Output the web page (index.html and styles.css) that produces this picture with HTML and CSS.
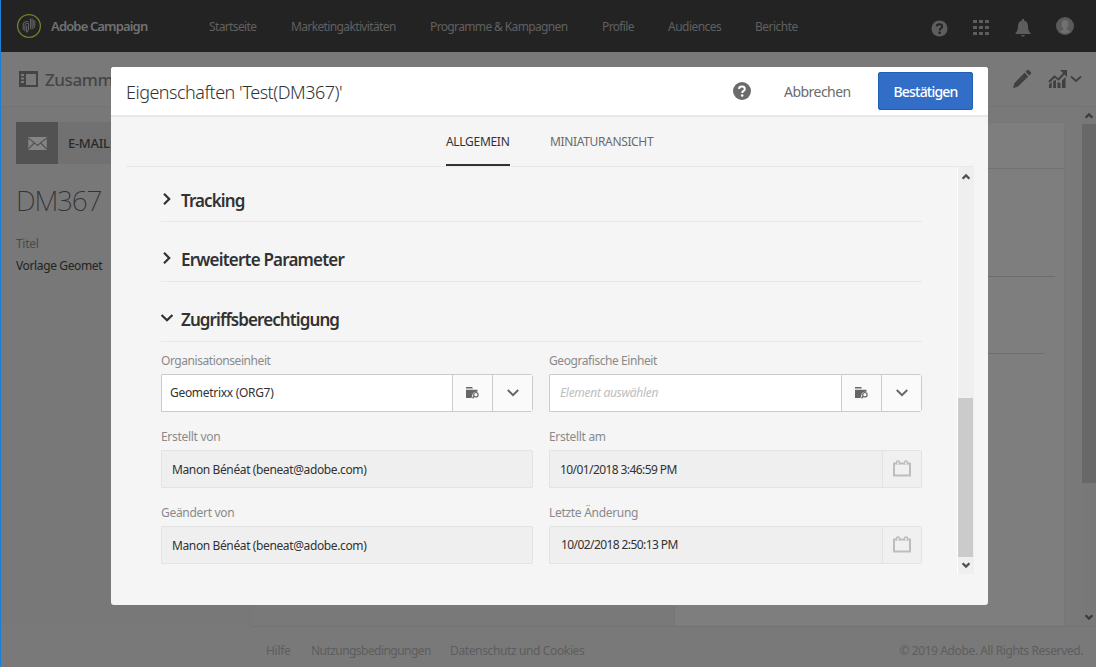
FILE: index.html
```html
<!DOCTYPE html>
<html lang="de">
<head>
<meta charset="utf-8">
<title>Adobe Campaign</title>
<link rel="stylesheet" href="styles.css">
</head>
<body>
<div class="app">
  <header class="topbar">
    <svg class="logo" viewBox="0 0 26 26"><circle cx="13" cy="13" r="11.4" fill="none" stroke="#73802b" stroke-width="1.3"/><g fill="none" stroke="#6c6c6c" stroke-width=".9"><path d="M7.200 17V12Q7.200 8.500 10.500 8.500H12.500"/><path d="M8.900 18.200V12.500Q8.900 10.300 11 10.300H12.500V16Q12.500 18.500 10.500 19.500"/><path d="M10.600 19V12.500"/><path d="M14.500 5.500V15.700H15.500Q18.800 15.700 18.800 12.500V7.500"/><path d="M16 5.500V14Q17.300 14 17.300 12.500V6.500"/></g></svg>
    <span class="brand">Adobe Campaign</span>
    <nav class="nav">
      <a class="n1">Startseite</a><a class="n2">Marketingaktivitäten</a><a class="n3">Programme &amp; Kampagnen</a><a class="n4">Profile</a><a class="n5">Audiences</a><a class="n6">Berichte</a>
    </nav>
    <div class="tools">
      <svg class="ic-help" viewBox="0 0 18 18"><circle cx="9" cy="9" r="8.500" fill="#5d5d5d"/><path d="M6 6.800Q6.200 4.500 9 4.500Q11.800 4.500 11.800 6.900Q11.800 8.300 10.200 9.100Q9.200 9.700 9.200 11" fill="none" stroke="#232323" stroke-width="2"/><circle cx="9.200" cy="13.500" r="1.300" fill="#232323"/></svg>
      <svg class="ic-grid" viewBox="0 0 16 16" fill="#5d5d5d"><path d="M0 0h4v3H0zM6 0h4v3H6zM12 0h4v3h-4zM0 6h4v3H0zM6 6h4v3H6zM12 6h4v3h-4zM0 12h4v3H0zM6 12h4v3H6zM12 12h4v3h-4z"/></svg>
      <svg class="ic-bell" viewBox="0 0 16 18" fill="#5d5d5d"><path d="M7 0h2v1.500Q13 2.500 13 7.500Q13 12 15.500 14v1H.5v-1Q3 12 3 7.500Q3 2.500 7 1.500zM6 16h4q-.5 1.500-2 1.500T6 16z"/></svg>
      <svg class="ic-user" viewBox="0 0 18 18"><circle cx="9" cy="9" r="9" fill="#5a5a5a"/><path d="M9 3Q12.500 3 12.500 7Q12.500 10 10.700 11.500V12.800L14 14Q12 16.500 9 16.500T4 14L7.300 12.800V11.500Q5.500 10 5.500 7Q5.500 3 9 3z" fill="#707070"/></svg>
    </div>
  </header>
  <div class="toolbar">
    <svg class="ic-rail" viewBox="0 0 19 16"><path d="M0 0h19v16H0zM7 3v11h10V3zM2 3v2h3V3zM2 6.500v2h3v-2zM2 10v2h3v-2z" fill="#444" fill-rule="evenodd"/></svg>
    <span class="crumb">Zusamme</span>
    <div class="actions">
      <svg class="ic-edit" viewBox="0 0 20 20" fill="#404040"><path d="M15 1.300Q16 .300 17.200 1.500L18.500 2.800Q19.700 4 18.700 5L17.200 6.500L13.500 2.800zM12.600 3.700L16.300 7.400L6 17.600L1 19.200L2.500 14z"/></svg>
      <svg class="ic-chart" viewBox="0 0 20 20"><path d="M1 15.500L3.700 13v6H1zM5.200 12L8 11v8H5.200zM9.500 13l3 1v5h-3zM14 11.500L17.500 8v11H14z" fill="#404040"/><path d="M1 13L6.500 7.500L10.500 10.500L16 4.500" fill="none" stroke="#404040" stroke-width="2"/><path d="M12 1h7v7z" fill="#404040"/></svg>
      <svg class="ic-down" viewBox="0 0 12 8"><path d="M1 1.500L6 6L11 1.500" fill="none" stroke="#404040" stroke-width="1.800"/></svg>
    </div>
  </div>
  <div class="workspace">
    <aside class="side">
      <div class="channel"><span class="mail"><svg viewBox="0 0 20 14"><path d="M0 0h20v14H0z" fill="#858585"/><path d="M0 1L10 9L20 1M0 13L6.500 6.500M20 13L13.500 6.500" fill="none" stroke="#525252" stroke-width="1.300"/></svg></span><span class="channel-name">E-MAIL</span></div>
      <div class="record">DM367</div>
      <div class="side-label">Titel</div>
      <div class="side-value">Vorlage Geomet</div>
    </aside>
    <main class="board"><section class="board-card"><div class="board-head"></div><div class="board-row"></div><div class="board-row short"></div></section></main>
    <div class="page-scroll"><svg class="arrow" viewBox="0 0 7 6"><path d="M.5 5L3.500 2L6.500 5" fill="none" stroke="#3c3c3c" stroke-width="2"/></svg><span class="page-thumb"></span><svg class="arrow" viewBox="0 0 7 6"><path d="M.5 1L3.500 4L6.500 1" fill="none" stroke="#3c3c3c" stroke-width="2"/></svg></div>
  </div>
  <footer class="footer"><a class="f1">Hilfe</a><a class="f2">Nutzungsbedingungen</a><a class="f3">Datenschutz und Cookies</a><span class="copy">© 2019 Adobe. All Rights Reserved.</span></footer>
</div>

<div class="dialog">
  <div class="dialog-head">
    <h1 class="dialog-title">Eigenschaften 'Test(DM367)'</h1>
    <svg class="ic-help2" viewBox="0 0 18 18"><circle cx="9" cy="9" r="9" fill="#6b6b6b"/><path d="M6 6.800Q6.200 4.500 9 4.500Q11.800 4.500 11.800 6.900Q11.800 8.300 10.200 9.100Q9.200 9.700 9.200 11" fill="none" stroke="#fff" stroke-width="2"/><circle cx="9.200" cy="13.500" r="1.300" fill="#fff"/></svg>
    <span class="cancel">Abbrechen</span>
    <button class="confirm"><span>Bestätigen</span></button>
  </div>
  <div class="tabs"><div class="tab active"><span>ALLGEMEIN</span></div><div class="tab second"><span>MINIATURANSICHT</span></div></div>
  <div class="dialog-body">
    <div class="form">
      <h2 class="section"><svg viewBox="0 0 12 12"><path d="M3 .8L8.200 6L3 11.200" fill="none" stroke="#323232" stroke-width="2.200"/></svg><span class="s1">Tracking</span></h2>
      <h2 class="section"><svg viewBox="0 0 12 12"><path d="M3 .8L8.200 6L3 11.200" fill="none" stroke="#323232" stroke-width="2.200"/></svg><span class="s2">Erweiterte Parameter</span></h2>
      <h2 class="section"><svg viewBox="0 0 12 12"><path d="M.6 3L6 8.300L11.400 3" fill="none" stroke="#323232" stroke-width="2.200"/></svg><span class="s3">Zugriffsberechtigung</span></h2>
      <div class="grid">
        <div class="field"><label class="l1">Organisationseinheit</label>
          <div class="input"><span class="value tight v1">Geometrixx (ORG7)</span><span class="btn"><svg class="ic-folder" viewBox="0 0 13 12"><path d="M0 0h6l1 1.500H0zM0 2.700h11.500v2Q6.500 4.200 6.300 8.500L5.500 11H0z" fill="#666"/><circle cx="9.900" cy="7.700" r="2.200" fill="none" stroke="#666" stroke-width="1.200"/><path d="M8.300 9.300L6.500 11.300" stroke="#666" stroke-width="1.500"/></svg></span><span class="btn"><svg class="ic-chev" viewBox="0 0 12 8"><path d="M.8 1L6 6.200L11.200 1" fill="none" stroke="#666" stroke-width="2"/></svg></span></div></div>
        <div class="field"><label class="l2">Geografische Einheit</label>
          <div class="input"><span class="value placeholder">Element auswählen</span><span class="btn"><svg class="ic-folder" viewBox="0 0 13 12"><path d="M0 0h6l1 1.500H0zM0 2.700h11.500v2Q6.500 4.200 6.300 8.500L5.500 11H0z" fill="#666"/><circle cx="9.900" cy="7.700" r="2.200" fill="none" stroke="#666" stroke-width="1.200"/><path d="M8.300 9.300L6.500 11.300" stroke="#666" stroke-width="1.500"/></svg></span><span class="btn"><svg class="ic-chev" viewBox="0 0 12 8"><path d="M.8 1L6 6.200L11.200 1" fill="none" stroke="#666" stroke-width="2"/></svg></span></div></div>
        <div class="field"><label class="l3">Erstellt von</label><div class="input disabled"><span class="value v3">Manon Bénéat (beneat@adobe.com)</span></div></div>
        <div class="field"><label class="l4">Erstellt am</label><div class="input disabled"><span class="value v4">10/01/2018 3:46:59 PM</span><span class="btn"><svg class="ic-cal" viewBox="0 0 18 17"><path d="M1 3.500h16V15.500H1z" fill="none" stroke="#bdbdbd" stroke-width="2"/><path d="M3.500 4.500V2.500Q3.500 1 5 1T6.500 2.500V4.500M11.500 4.500V2.500Q11.500 1 13 1T14.500 2.500V4.500" fill="#eee" stroke="#bdbdbd" stroke-width="1.500"/></svg></span></div></div>
        <div class="field"><label class="l5">Geändert von</label><div class="input disabled"><span class="value v3">Manon Bénéat (beneat@adobe.com)</span></div></div>
        <div class="field"><label class="l6">Letzte Änderung</label><div class="input disabled"><span class="value v4 late">10/02/2018 2:50:13 PM</span><span class="btn"><svg class="ic-cal" viewBox="0 0 18 17"><path d="M1 3.500h16V15.500H1z" fill="none" stroke="#bdbdbd" stroke-width="2"/><path d="M3.500 4.500V2.500Q3.500 1 5 1T6.500 2.500V4.500M11.500 4.500V2.500Q11.500 1 13 1T14.500 2.500V4.500" fill="#eee" stroke="#bdbdbd" stroke-width="1.500"/></svg></span></div></div>
      </div>
    </div>
    <div class="scroll"><svg class="arrow" viewBox="0 0 7 6"><path d="M.5 5L3.500 2L6.500 5" fill="none" stroke="#505050" stroke-width="2"/></svg><span class="thumb"></span><svg class="arrow" viewBox="0 0 7 6"><path d="M.5 1L3.500 4L6.500 1" fill="none" stroke="#505050" stroke-width="2"/></svg></div>
  </div>
</div>
</body>
</html>
```

FILE: styles.css
```css
* { box-sizing: border-box; }
body { margin: 0; width: 1096px; height: 667px; overflow: hidden; font-family: "Noto Sans", "Open Sans", sans-serif; font-size: 12px; letter-spacing: -0.3px; color: #323232; }
svg { display: block; flex: none; }
h1, h2 { margin: 0; }
span, a, label, h1, div { white-space: nowrap; }

.app { width: 1096px; height: 667px; background: #797979; border-left: 1px solid #1a7fd6; display: flex; flex-direction: column; }
.topbar { height: 52px; background: #232323; display: flex; align-items: center; padding: 0 22px 0 15px; color: #6b6b6b; }
.logo { width: 26px; height: 26px; }
.brand { margin-left: 9px; width: 158px; font-size: 13px; font-weight: 600; color: #717171; letter-spacing: -0.85px; }
.nav { display: flex; width: 700px; line-height: 18px; padding-top: 1px; color: #606060; letter-spacing: -0.63px; }
.n1 { width: 82px; } .n2 { width: 139px; } .n3 { width: 172px; } .n4 { width: 66px; } .n5 { width: 87px; }
.n5, .n6 { letter-spacing: -0.52px; }
.tools { margin-left: auto; display: flex; align-items: center; }
.ic-help { width: 17px; height: 17px; margin-top: 4px; }
.ic-grid { width: 16px; height: 16px; margin: 3px 0 0 25px; }
.ic-bell { width: 16px; height: 18px; margin: 4px 0 0 26px; }
.ic-user { width: 18px; height: 18px; margin-left: 25px; }

.toolbar { height: 55px; display: flex; align-items: center; padding: 0 14px 0 18px; border-bottom: 1px solid #737373; }
.ic-rail { width: 19px; height: 16px; }
.crumb { margin-left: 7px; width: 66px; overflow: hidden; font-size: 17px; font-weight: 500; letter-spacing: -0.4px; color: #454545; }
.actions { margin-left: auto; display: flex; align-items: center; }
.ic-edit { width: 20px; height: 20px; }
.ic-chart { width: 20px; height: 20px; margin-left: 16px; }
.ic-down { width: 12px; height: 8px; margin-left: 2px; }

.workspace { flex: 1; display: flex; min-height: 0; }
.side { width: 251px; padding: 15px 0 0 15px; background: #787878; }
.channel { display: flex; height: 42px; background: #717171; align-items: center; }
.mail { width: 42px; height: 42px; background: #525252; display: flex; align-items: center; justify-content: center; }
.mail svg { width: 19px; height: 13px; }
.channel-name { margin-left: 10px; font-size: 13px; font-weight: 500; color: #292929; letter-spacing: -0.3px; }
.record { margin-top: 17px; font-size: 28px; line-height: 38px; font-weight: 200; color: #333; letter-spacing: -1.2px; }
.side-label { margin-top: 16px; line-height: 18px; color: #4a4a4a; }
.side-value { margin-top: 4px; line-height: 18px; color: #232323; letter-spacing: -0.37px; }
.board { flex: 1; padding: 15px 17px 0 422px; background: #797979; }
.board-card { height: 504px; background: #7e7e7e; border: 1px solid #777; border-bottom: 0; }
.board-head { height: 46px; border-bottom: 1px solid #717171; }
.board-row { height: 108px; margin-right: 9px; border-bottom: 1px solid #6e6e6e; }
.board-row.short { height: 77px; margin-right: 20px; }
.page-scroll { width: 14px; background: #787878; display: flex; flex-direction: column; align-items: center; padding: 5px 0; }
.arrow { width: 8px; height: 7px; }
.page-thumb { width: 14px; height: 359px; margin: 5px 0 auto; background: #686868; }
.footer { height: 41px; margin-left: 251px; border-top: 1px solid #737373; display: flex; align-items: center; padding: 7px 13px 0 14px; color: #5d5d5d; }
.f1 { width: 45px; } .f2 { width: 139px; letter-spacing: -0.55px; } .f3 { letter-spacing: -0.37px; }
.copy { margin-left: auto; letter-spacing: -0.4px; }

/* the dialog floats above the page */
.dialog { position: absolute; left: 111px; top: 67px; width: 877px; height: 538px; background: #f5f5f5; border-radius: 3px; display: flex; flex-direction: column; overflow: hidden; }
.dialog-head { height: 50px; background: #fff; border-bottom: 2px solid #e8e8e8; display: flex; align-items: center; padding: 0 15px; flex: none; }
.dialog-title { font-size: 18px; font-weight: 350; letter-spacing: -0.5px; padding-top: 2px; }
.ic-help2 { width: 18px; height: 18px; margin-left: auto; }
.cancel { width: 67px; margin: 0 27px 0 33px; font-size: 14px; letter-spacing: -0.53px; color: #6b6b6b; }
.confirm { width: 95px; height: 38px; padding: 0; background: #326ec8; border: 1px solid #2260b8; border-radius: 2px; color: #fff; font: 500 14px "Noto Sans", sans-serif; letter-spacing: -0.8px; }
.tabs { height: 50px; margin: 0 15px; border-bottom: 1px solid #e8e8e8; display: flex; padding-left: 320px; flex: none; }
.tab { height: 49px; line-height: 49px; color: #6b6b6b; }
.tab.active { width: 64px; color: #323232; border-bottom: 2px solid #323232; }
.tab.second { margin-left: 40px; letter-spacing: -0.35px; }
.dialog-body { display: flex; height: 407px; padding: 0 14px 0 50px; }
.form { width: 761px; }
.section { height: 60px; padding: 16px 0 0; border-bottom: 1px solid #e8e8e8; display: flex; align-items: center; font-size: 17px; font-weight: 600; }
.section:first-child { height: 55px; padding-top: 12px; }
.section svg { width: 12px; height: 12px; margin: -3px 8px 0 0; }
.s1 { letter-spacing: -0.9px; }
.s2 { letter-spacing: -0.8px; }
.s3 { letter-spacing: -0.9px; }
.grid { display: grid; grid-template-columns: 372px 373px; column-gap: 16px; row-gap: 0; padding-top: 9px; }
.field { height: 76px; }
.field label { display: block; height: 23px; line-height: 19px; color: #8a8a8a; }
.field .l1, .field .l2 { letter-spacing: -0.43px; }
.input { height: 38px; display: flex; background: #fff; border: 1px solid #cbcbcb; border-radius: 0 3px 3px 0; }
.value { flex: 1; padding-left: 10px; line-height: 36px; }
.value.tight { padding-left: 8px; }
.v3, .v4 { line-height: 38px; }
.v3 { letter-spacing: -0.38px; }
.v4 { letter-spacing: -0.58px; }
.v4.late { padding-left: 11px; line-height: 36px; }
.placeholder { font-style: italic; color: #bebebe; }
.btn { width: 40px; border-left: 1px solid #cbcbcb; background: #fafafa; display: flex; align-items: center; justify-content: center; }
.disabled { background: #efefef; border-color: #e3e3e3; border-radius: 0 2px 2px 0; }
.disabled .btn { border-color: #e3e3e3; background: #f0f0f0; width: 39px; }
.ic-folder { width: 13px; height: 12px; }
.ic-chev { width: 12px; height: 8px; }
.ic-cal { width: 18px; height: 17px; margin-bottom: 2px; }
.scroll { width: 17px; margin-left: auto; border-left: 1px solid #fff; background: #efefef; display: flex; flex-direction: column; align-items: center; padding: 6px 1px 5px 0; }
.thumb { width: 15px; height: 159px; margin: auto 0 5px; background: #cbcbcb; }
```
